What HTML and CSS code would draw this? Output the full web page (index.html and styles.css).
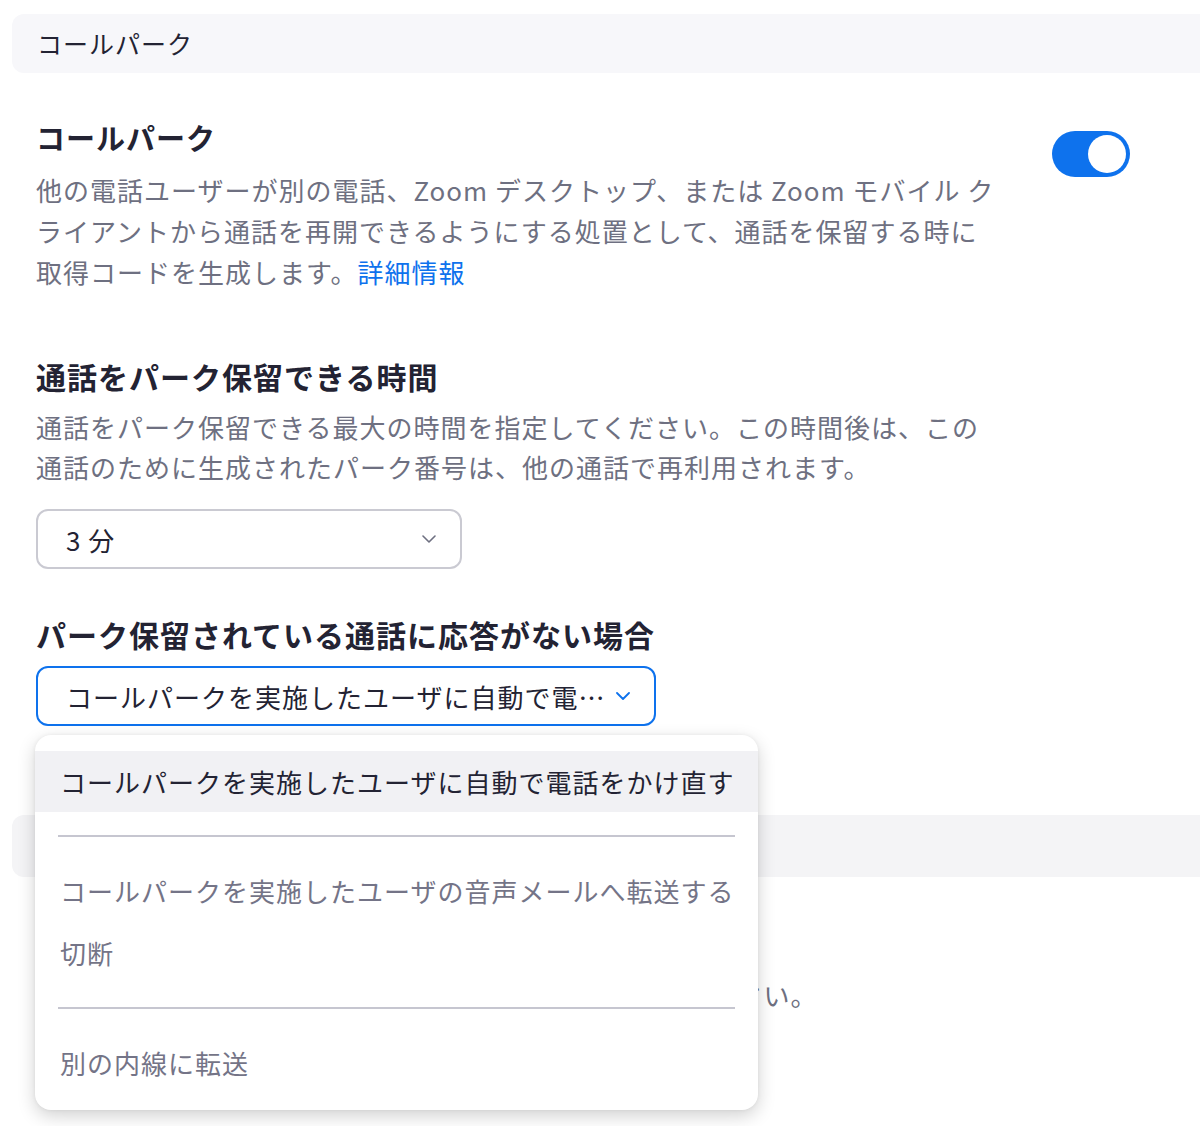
FILE: index.html
```html
<!DOCTYPE html>
<html lang="ja">
<head>
  <meta charset="UTF-8">
  <meta name="viewport" content="width=device-width, initial-scale=1.0">
  <title>コールパーク</title>
  <link rel="stylesheet" href="styles.css">
</head>
<body>
  <div class="page">
    <div class="section-bar">コールパーク</div>

    <div class="setting-row">
      <div class="setting-text">
        <div class="title">コールパーク</div>
        <div class="desc">他の電話ユーザーが別の電話、Zoom デスクトップ、または Zoom モバイル クライアントから通話を再開できるようにする処置として、通話を保留する時に取得コードを生成します。<a href="#" class="link">詳細情報</a></div>
      </div>
      <div class="toggle on"><span class="knob"></span></div>
    </div>

    <div class="setting">
      <div class="heading">通話をパーク保留できる時間</div>
      <div class="desc">通話をパーク保留できる最大の時間を指定してください。この時間後は、この通話のために生成されたパーク番号は、他の通話で再利用されます。</div>
      <div class="select short">
        <span class="select-value">3 分</span>
        <svg class="chevron" viewBox="0 0 14 8" width="14" height="8"><path d="M1 1l6 6 6-6" fill="none" stroke="currentColor" stroke-width="1.6" stroke-linecap="round" stroke-linejoin="round"/></svg>
      </div>

      <div class="heading heading-gap">パーク保留されている通話に応答がない場合</div>
      <div class="select-wrap">
        <div class="select wide open">
          <span class="select-value">コールパークを実施したユーザに自動で電話をかけ直す</span>
          <svg class="chevron" viewBox="0 0 14 8" width="14" height="8"><path d="M1 1l6 6 6-6" fill="none" stroke="currentColor" stroke-width="1.8" stroke-linecap="round" stroke-linejoin="round"/></svg>
        </div>
        <ul class="menu">
          <li class="menu-item active">コールパークを実施したユーザに自動で電話をかけ直す</li>
          <li class="menu-divider"></li>
          <li class="menu-item">コールパークを実施したユーザの音声メールへ転送する</li>
          <li class="menu-item">切断</li>
          <li class="menu-divider"></li>
          <li class="menu-item">別の内線に転送</li>
        </ul>
      </div>
    </div>

    <div class="section-bar lower">転送</div>
    <div class="setting after-bar">
      <div class="heading">転送先</div>
      <div class="desc">応答がない場合に通話を転送する内線番号を指定してください。</div>
    </div>
  </div>
</body>
</html>
```

FILE: styles.css
```css
body {
  margin: 0;
  font-family: "Noto Sans CJK JP", "Noto Sans", sans-serif;
  color: #232333;
  background: #fff;
}
.page {
  padding-top: 14px;
  overflow: hidden;
  height: 1112px;
}
.section-bar {
  margin-left: 12px;
  height: 59px;
  line-height: 59px;
  padding-left: 25px;
  background-color: #f7f7fa;
  border-radius: 12px 0 0 12px;
  font-size: 25px;
  letter-spacing: 1px;
  color: #232333;
}
.section-bar.lower {
  margin-top: 89px;
  height: 62px;
  background-color: #f4f4f6;
}
.setting-row {
  display: flex;
  align-items: flex-start;
  justify-content: space-between;
  padding: 0 70px 0 36px;
  margin-top: 44px;
}
.setting-text {
  width: 962px;
}
.title {
  font-size: 29px;
  font-weight: bold;
  line-height: 40px;
  letter-spacing: 1px;
}
.desc {
  font-size: 26px;
  line-height: 41px;
  letter-spacing: 1px;
  color: #6e7081;
  margin-top: 12px;
}
.link {
  color: #0e72ed;
  text-decoration: none;
}
.toggle {
  width: 78px;
  height: 46px;
  border-radius: 23px;
  background-color: #0e72ed;
  margin-top: 14px;
  display: flex;
  align-items: center;
  justify-content: flex-end;
  padding: 0 4px;
  box-sizing: border-box;
}
.knob {
  width: 38px;
  height: 38px;
  border-radius: 50%;
  background-color: #fff;
}
.setting {
  padding-left: 36px;
  margin-top: 64px;
  width: 955px;
}
.setting.after-bar {
  margin-top: 47px;
}
.setting .desc {
  line-height: 40px;
  margin-top: 11px;
}
.heading {
  font-size: 30px;
  font-weight: bold;
  line-height: 40px;
  letter-spacing: 1px;
}
.heading-gap {
  margin-top: 45px;
}
.select {
  display: flex;
  align-items: center;
  gap: 6px;
  height: 60px;
  box-sizing: border-box;
  border: 2px solid #cacad2;
  border-radius: 12px;
  padding: 0 24px 0 28px;
  font-size: 26px;
  letter-spacing: 1px;
  color: #232333;
  background: #fff;
}
.select.short {
  width: 426px;
  margin-top: 22px;
}
.select.wide {
  width: 620px;
  border-color: #0e72ed;
}
.select-value {
  flex: 1;
  min-width: 0;
  white-space: nowrap;
  overflow: hidden;
  text-overflow: ellipsis;
}
.chevron {
  flex-shrink: 0;
  color: #6e7081;
}
.select.open .chevron {
  color: #0e72ed;
}
.select-wrap {
  position: relative;
  margin-top: 12px;
}
.menu {
  position: absolute;
  left: -1px;
  top: 69px;
  width: 723px;
  margin: 0;
  padding: 16px 0;
  list-style: none;
  background: #fff;
  border-radius: 16px;
  box-shadow: 0 6px 18px rgba(0, 0, 0, 0.18), 0 0 4px rgba(0, 0, 0, 0.06);
  z-index: 10;
}
.menu-item {
  height: 62px;
  line-height: 62px;
  padding-left: 25px;
  font-size: 26px;
  letter-spacing: 1px;
  color: #747487;
  white-space: nowrap;
}
.menu-item.active {
  background-color: #f1f1f4;
  color: #232333;
  height: 61px;
  line-height: 61px;
}
.menu-divider {
  height: 2px;
  margin: 23px 23px;
  background-color: #c6c6d0;
}
```
